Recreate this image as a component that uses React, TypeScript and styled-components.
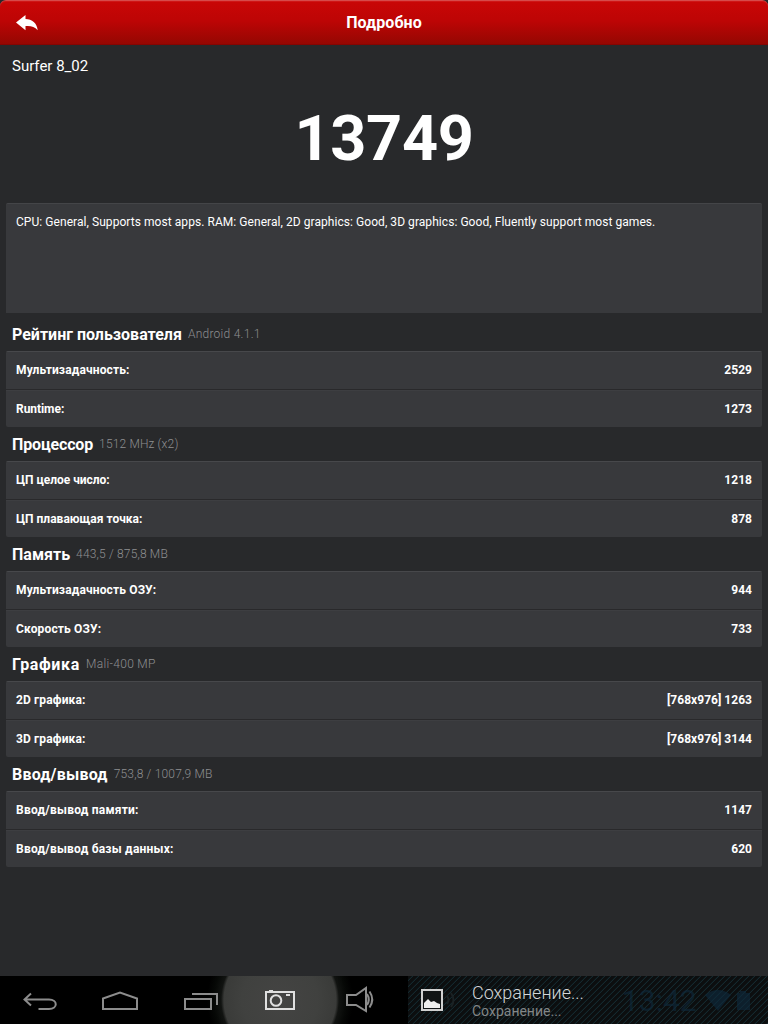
import React from 'react';
import styled, { createGlobalStyle } from 'styled-components';

const GlobalStyle = createGlobalStyle`
  * { box-sizing: border-box; }
  body { margin: 0; background: #28292b; }
`;

const Screen = styled.div`
  width: 768px;
  height: 1024px;
  display: flex;
  flex-direction: column;
  overflow: hidden;
  background: #28292b;
  color: #fff;
  font-family: Roboto, 'Noto Sans', sans-serif;
  white-space: nowrap;
`;

const Header = styled.header`
  flex: none;
  height: 45px;
  display: grid;
  grid-template-columns: 54px 1fr 54px;
  align-items: center;
  border-radius: 6px 6px 0 0;
  border-top: 1px solid #d64a4a;
  background: linear-gradient(#c90606, #bd0505 45%, #930702);
  box-shadow: inset 0 1px 0 #cf1616, inset 0 -1px 0 #850502;
`;

const BackIcon = styled.svg`
  width: 22px;
  height: 17px;
  margin-left: 16px;
`;

const Title = styled.h1`
  margin: 0;
  text-align: center;
  font-size: 16px;
  line-height: 20px;
  font-weight: 700;
  letter-spacing: 0.1px;
`;

const Device = styled.div`
  height: 42px;
  padding: 11px 12px 0;
  font-size: 15px;
  line-height: 20px;
`;

const Score = styled.div`
  height: 116px;
  padding-top: 14px;
  text-align: center;
  font-size: 63px;
  line-height: 76px;
  font-weight: 700;
  letter-spacing: -0.3px;
`;

const Summary = styled.p`
  margin: 0 6px 4px;
  height: 110px;
  padding: 9px 10px;
  border-top: 1px solid #444548;
  border-radius: 2px 2px 0 0;
  background: #38393c;
  font-size: 12px;
  line-height: 18px;
  letter-spacing: 0.057px;
`;

const Section = styled.section`
  flex: none;
  height: 110px;
`;

const SectionHead = styled.div`
  height: 34px;
  display: flex;
  align-items: center;
  gap: 6px;
  padding: 0 12px;
`;

const SectionName = styled.h2<{ $track: number }>`
  margin: 0;
  padding-top: 2px;
  font-size: 16px;
  line-height: 20px;
  font-weight: 700;
  letter-spacing: ${(p) => p.$track}px;
`;

const Note = styled.span<{ $track: number }>`
  color: #8e8f91;
  font-weight: 300;
  font-size: 12px;
  line-height: 18px;
  letter-spacing: ${(p) => p.$track}px;
`;

const Card = styled.div`
  margin: 0 6px;
  border-radius: 2px;
  background: #38393c;
  overflow: hidden;
`;

const Row = styled.div`
  height: 38px;
  display: flex;
  justify-content: space-between;
  align-items: center;
  padding: 0 10px;
  font-size: 12px;
  line-height: 18px;
  font-weight: 700;
  &:first-child { border-top: 1px solid #47484b; padding-bottom: 1px; }
  & + & { border-top: 1px solid #29292b; box-shadow: inset 0 1px 0 #3d3e41; padding-top: 1px; }
`;

const Label = styled.span<{ $track: number }>`
  letter-spacing: ${(p) => p.$track}px;
`;

const NavBar = styled.nav`
  flex: none;
  height: 48px;
  margin-top: auto;
  display: flex;
  background: #000;
`;

const NavButtons = styled.div`
  width: 408px;
  height: 48px;
  background: radial-gradient(circle at 280px 24px, #444443 0, #40413f 38px, #3a3b39 56px, #111311 59px, #060806 66px, #000 73px);
  svg { display: block; }
`;

const Tray = styled.div`
  flex: 1;
  display: flex;
  background: repeating-linear-gradient(135deg, #0c0e0f 0 2.6px, #142a30 3.5px, #0c0e0f 4.243px);
`;

const ImageIcon = styled.svg`
  width: 52px;
  height: 48px;
  flex: none;
`;

const Toast = styled.div`
  width: 150px;
  margin-left: 12px;
  padding-top: 6px;
`;

const ToastTitle = styled.div`
  color: #d4d7d8;
  font-size: 18px;
  line-height: 22px;
  font-weight: 300;
`;

const ToastText = styled.div`
  color: #828687;
  font-size: 14px;
  line-height: 15px;
`;

const Clock = styled.div`
  color: rgba(14, 42, 60, 0.65);
  font-size: 30px;
  line-height: 50px;
  font-weight: 400;
`;

const StatusIcons = styled.svg`
  width: 58px;
  height: 48px;
`;

interface Item { label: string; value: string; track: number }
interface Group { name: string; note: string; track: number; noteTrack: number; rows: Item[] }

const groups: Group[] = [
  { name: 'Рейтинг пользователя', note: 'Android 4.1.1', track: 0, noteTrack: 0.26, rows: [
    { label: 'Мультизадачность:', value: '2529', track: 0.14 },
    { label: 'Runtime:', value: '1273', track: -0.05 }] },
  { name: 'Процессор', note: '1512 MHz (x2)', track: -0.15, noteTrack: 0.15, rows: [
    { label: 'ЦП целое число:', value: '1218', track: -0.03 },
    { label: 'ЦП плавающая точка:', value: '878', track: 0 }] },
  { name: 'Память', note: '443,5 / 875,8 MB', track: 0, noteTrack: 0.17, rows: [
    { label: 'Мультизадачность ОЗУ:', value: '944', track: 0.14 },
    { label: 'Скорость ОЗУ:', value: '733', track: 0.15 }] },
  { name: 'Графика', note: 'Mali-400 MP', track: 0.65, noteTrack: 0.32, rows: [
    { label: '2D графика:', value: '[768x976] 1263', track: 0.14 },
    { label: '3D графика:', value: '[768x976] 3144', track: 0.14 }] },
  { name: 'Ввод/вывод', note: '753,8 / 1007,9 MB', track: 0.2, noteTrack: 0.18, rows: [
    { label: 'Ввод/вывод памяти:', value: '1147', track: 0.23 },
    { label: 'Ввод/вывод базы данных:', value: '620', track: 0.22 }] },
];

export default function App() {
  return (
    <>
      <GlobalStyle />
      <Screen>
        <Header>
          <BackIcon viewBox="0 0 22 17">
            <path d="M0 7.5 9.5 0v4C16 4 21 8 21.7 15.3 18.5 11.5 15 10.6 9.5 11v4.2z" fill="#fff" />
          </BackIcon>
          <Title>Подробно</Title>
        </Header>
        <Device>Surfer 8_02</Device>
        <Score>13749</Score>
        <Summary>CPU: General, Supports most apps. RAM: General, 2D graphics: Good, 3D graphics: Good, Fluently support most games.</Summary>
        {groups.map((g) => (
          <Section key={g.name}>
            <SectionHead>
              <SectionName $track={g.track}>{g.name}</SectionName>
              <Note $track={g.noteTrack}>{g.note}</Note>
            </SectionHead>
            <Card>
              {g.rows.map((r) => (
                <Row key={r.label}>
                  <Label $track={r.track}>{r.label}</Label>
                  <Label $track={0.03}>{r.value}</Label>
                </Row>
              ))}
            </Card>
          </Section>
        ))}
        <NavBar>
          <NavButtons>
            <svg width="408" height="48" fill="none" stroke="#8c8c8c" strokeWidth="2">
              <path d="M31 17.5 24.5 23.5 31 29.5M25 23.5H49C58 23.5 58 33 49 33H38.500" />
              <path d="M103 33V22.500L120 16.500 137 22.500V33z" />
              <path d="M185 23H211V33H185zM192 18H217V29" />
              <g stroke="#e0e0e0">
                <path d="M266 16H294V33H266z" />
                <circle cx="276" cy="24.500" r="5.300" />
                <path d="M269 15H273M286 19H290" />
              </g>
              <path d="M347 19H356L366 12V35L356 29H347z" />
              <path d="M367 18Q370.500 23.500 367 29M369.500 15.500Q375 23.500 369.500 31.500" />
            </svg>
          </NavButtons>
          <Tray>
            <ImageIcon viewBox="0 0 52 48">
              <path d="M43 17Q48 24 43 31M39 20Q42 24 39 28" fill="none" stroke="#1b2224" strokeWidth="2" />
              <path d="M14 14H34V34H14z" fill="#111415" stroke="#d0d0d0" strokeWidth="2" />
              <path d="M16 32V27L20 23 23 26 26 25 29 27 32 28V32z" fill="#eee" />
            </ImageIcon>
            <Toast>
              <ToastTitle>Сохранение...</ToastTitle>
              <ToastText>Сохранение...</ToastText>
            </Toast>
            <Clock>13:42</Clock>
            <StatusIcons viewBox="0 0 58 48" fill="rgba(14, 42, 60, 0.65)">
              <path d="M8 19Q21 9 34 19L21 35z" />
              <path d="M40 17H43V15H49V17H53V34H40z" />
            </StatusIcons>
          </Tray>
        </NavBar>
      </Screen>
    </>
  );
}
